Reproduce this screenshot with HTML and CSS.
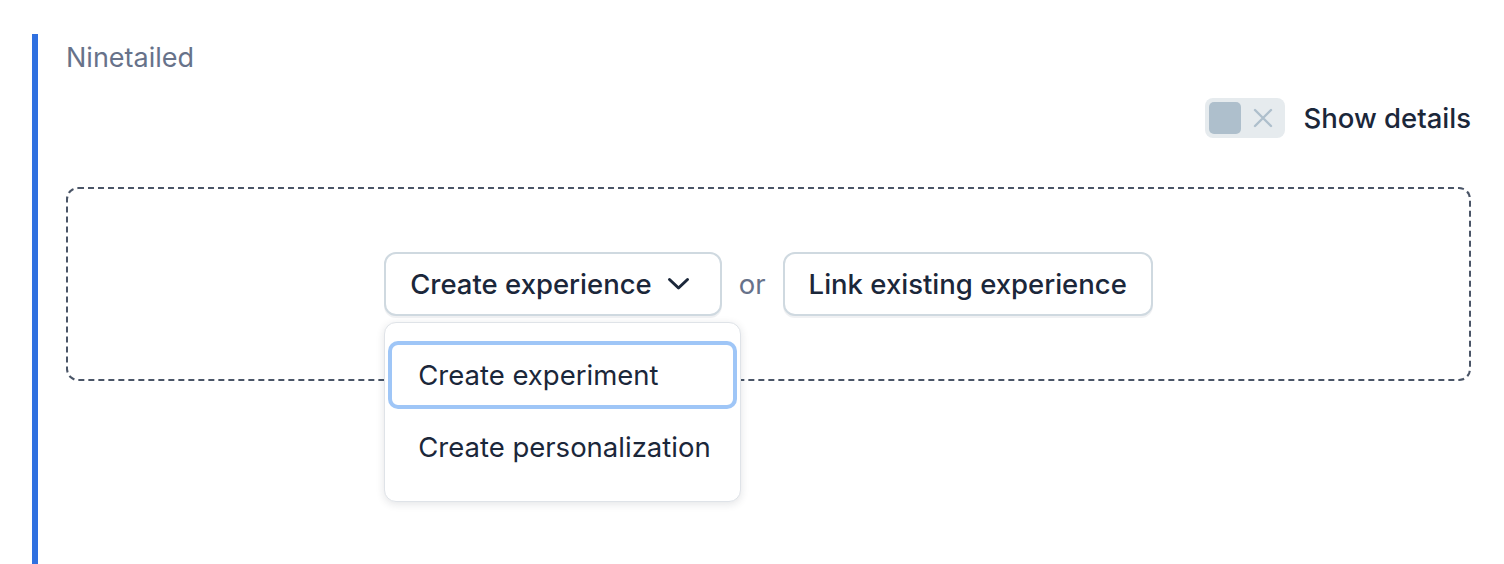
FILE: index.html
```html
<!DOCTYPE html>
<html lang="en">
<head>
<meta charset="utf-8">
<title>Ninetailed</title>
<link rel="stylesheet" href="styles.css">
</head>
<body>
<div class="field">
  <div class="field-title">Ninetailed</div>
  <div class="toolbar">
    <label class="switch">
      <span class="switch-track">
        <span class="switch-knob"></span>
        <svg class="switch-x" width="20" height="20" viewBox="0 0 20 20"><path d="M2 2 L18 18 M18 2 L2 18" stroke="#aebfcc" stroke-width="2.4" stroke-linecap="round" fill="none"/></svg>
      </span>
      <span class="switch-label">Show details</span>
    </label>
  </div>
  <div class="dropzone">
    <div class="actions">
      <div class="menu-wrap">
        <button class="btn btn-menu">Create experience
          <svg class="chev" width="23" height="14" viewBox="0 0 23 14"><path d="M2.5 2.5 L11.5 11 L20.5 2.5" stroke="#1b273a" stroke-width="3" stroke-linecap="round" stroke-linejoin="round" fill="none"/></svg>
        </button>
        <div class="menu">
          <div class="menu-item focused">Create experiment</div>
          <div class="menu-item">Create personalization</div>
        </div>
      </div>
      <span class="or">or</span>
      <button class="btn">Link existing experience</button>
    </div>
  </div>
</div>
</body>
</html>
```
FILE: styles.css
```css
html, body {
  margin: 0;
  padding: 0;
  background: #ffffff;
  font-family: Inter, "Noto Sans", "Liberation Sans", sans-serif;
  color: #1b273a;
}

.field {
  margin-left: 32px;
  margin-top: 34px;
  border-left: 6px solid #2f70e0;
  padding: 7px 33px 0 28px;
  min-height: 540px;
  box-sizing: border-box;
}

.field-title {
  font-size: 27px;
  line-height: 34px;
  color: #67728a;
}

.toolbar {
  display: flex;
  justify-content: flex-end;
  margin-top: 23px;
}

.switch {
  display: flex;
  align-items: center;
  gap: 18px;
}

.switch-track {
  width: 80px;
  height: 40px;
  box-sizing: border-box;
  background: #e6ebee;
  border-radius: 8px;
  display: flex;
  align-items: center;
  padding: 4px;
  gap: 12px;
}

.switch-knob {
  width: 32px;
  height: 32px;
  border-radius: 5px;
  background: #aebfcc;
}

.switch-x {
  display: block;
}

.switch-label {
  font-size: 27.5px;
  line-height: 40px;
  color: #1b273a;
  font-weight: 500;
}

.dropzone {
  margin-top: 49px;
  height: 194px;
  box-sizing: border-box;
  border: 2px dashed #4a5567;
  border-radius: 12px;
  display: flex;
  align-items: center;
  justify-content: center;
}

.actions {
  display: flex;
  align-items: center;
  gap: 17px;
}

.menu-wrap {
  position: relative;
}

.btn {
  font-family: inherit;
  font-size: 27.5px;
  font-weight: 500;
  color: #1b273a;
  background: #ffffff;
  border: 2px solid #cfd9e0;
  border-radius: 12px;
  height: 64px;
  padding: 0 24px;
  display: flex;
  align-items: center;
  gap: 15px;
  box-shadow: 0 2px 0 rgba(225, 228, 232, 0.5);
}

.btn-menu {
  padding-right: 30px;
}

.chev {
  display: block;
}

.or {
  font-size: 27.5px;
  color: #67728a;
}

.menu {
  position: absolute;
  top: 70px;
  left: 0;
  width: 357px;
  box-sizing: border-box;
  background: #ffffff;
  border: 1px solid #dfe3e8;
  border-radius: 12px;
  padding: 18px 3px 16px;
  box-shadow: 0 2px 8px rgba(25, 37, 50, 0.12);
}

.menu-item {
  height: 68px;
  box-sizing: border-box;
  margin-bottom: 4px;
  display: flex;
  align-items: center;
  padding-left: 30px;
  font-size: 27.5px;
  color: #1b273a;
  border-radius: 10px;
}

.menu-item.focused {
  box-shadow: inset 0 0 0 4px #9fc6f7;
}
```
